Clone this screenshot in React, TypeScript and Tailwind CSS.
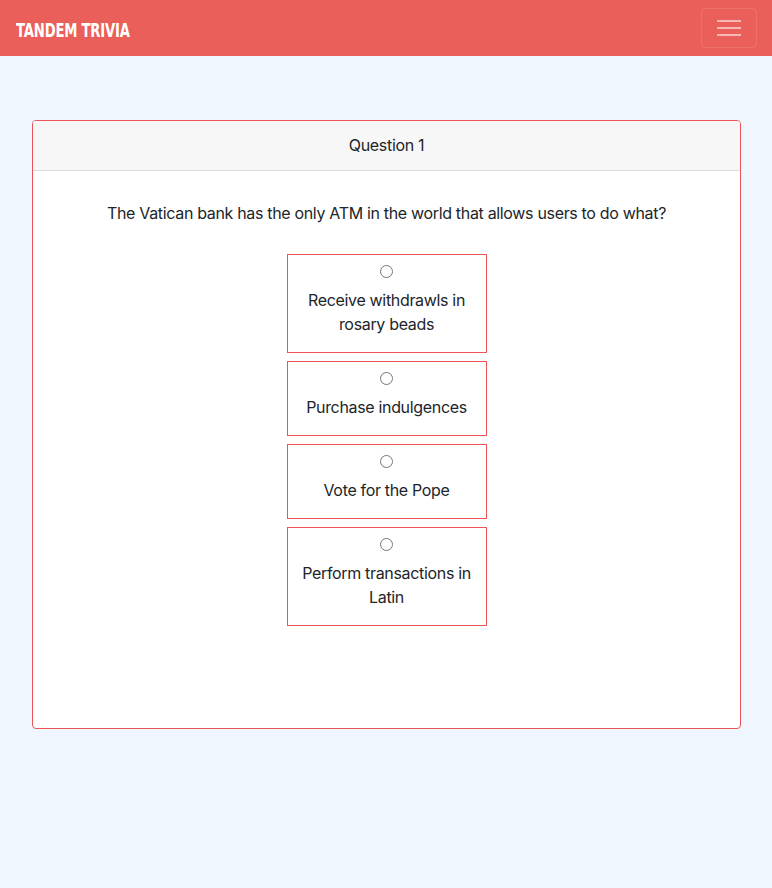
import React from 'react';

const answers = [
  'Receive withdrawls in rosary beads',
  'Purchase indulgences',
  'Vote for the Pope',
  'Perform transactions in Latin',
];

export default function App() {
  return (
    <div
      className="min-h-[888px] bg-[#eff6ff] text-[#212529] tracking-[-0.33px]"
      style={{ fontFamily: 'Inter, "Noto Sans", sans-serif' }}
    >
      <nav className="h-14 bg-[#eb5f5b] flex items-center justify-between pl-4 pr-[15px]">
        <span
          className="inline-block origin-left scale-x-[0.66] mt-1 text-white text-[20px] font-bold tracking-[-0.3px] uppercase"
          style={{ fontFamily: '"DejaVu Sans", sans-serif' }}
        >
          Tandem Trivia
        </span>
        <button className="w-14 h-10 rounded border border-white/10 flex items-center justify-center">
          <svg width="24" height="20" viewBox="0 0 24 20">
            <path d="M0 3h24M0 10h24M0 17h24" stroke="rgba(255,255,255,0.55)" strokeWidth="2" />
          </svg>
        </button>
      </nav>

      <div className="pl-8 pr-[31px] pt-16">
        <div className="bg-white border border-[#ea5455] rounded overflow-hidden min-h-[609px]">
          <div className="h-[50px] bg-[#f7f7f7] border-b border-[#dcdcdc] flex items-center justify-center text-base pb-[2px]">
            Question 1
          </div>
          <div className="pt-[30px] pb-8 flex flex-col items-center">
            <p className="text-base leading-6">
              The Vatican bank has the only ATM in the world that allows users to do what?
            </p>
            <div className="mt-[29px] flex flex-col gap-2">
              {answers.map((a) => (
                <label
                  key={a}
                  className="w-[200px] border border-[#ea5455] flex flex-col items-center pt-[10px] pb-4 px-3 text-center"
                >
                  <input type="radio" name="answer" className="w-[13px] h-[13px] m-0" />
                  <span className="mt-[10px] text-base leading-6">{a}</span>
                </label>
              ))}
            </div>
          </div>
        </div>
      </div>
    </div>
  );
}
